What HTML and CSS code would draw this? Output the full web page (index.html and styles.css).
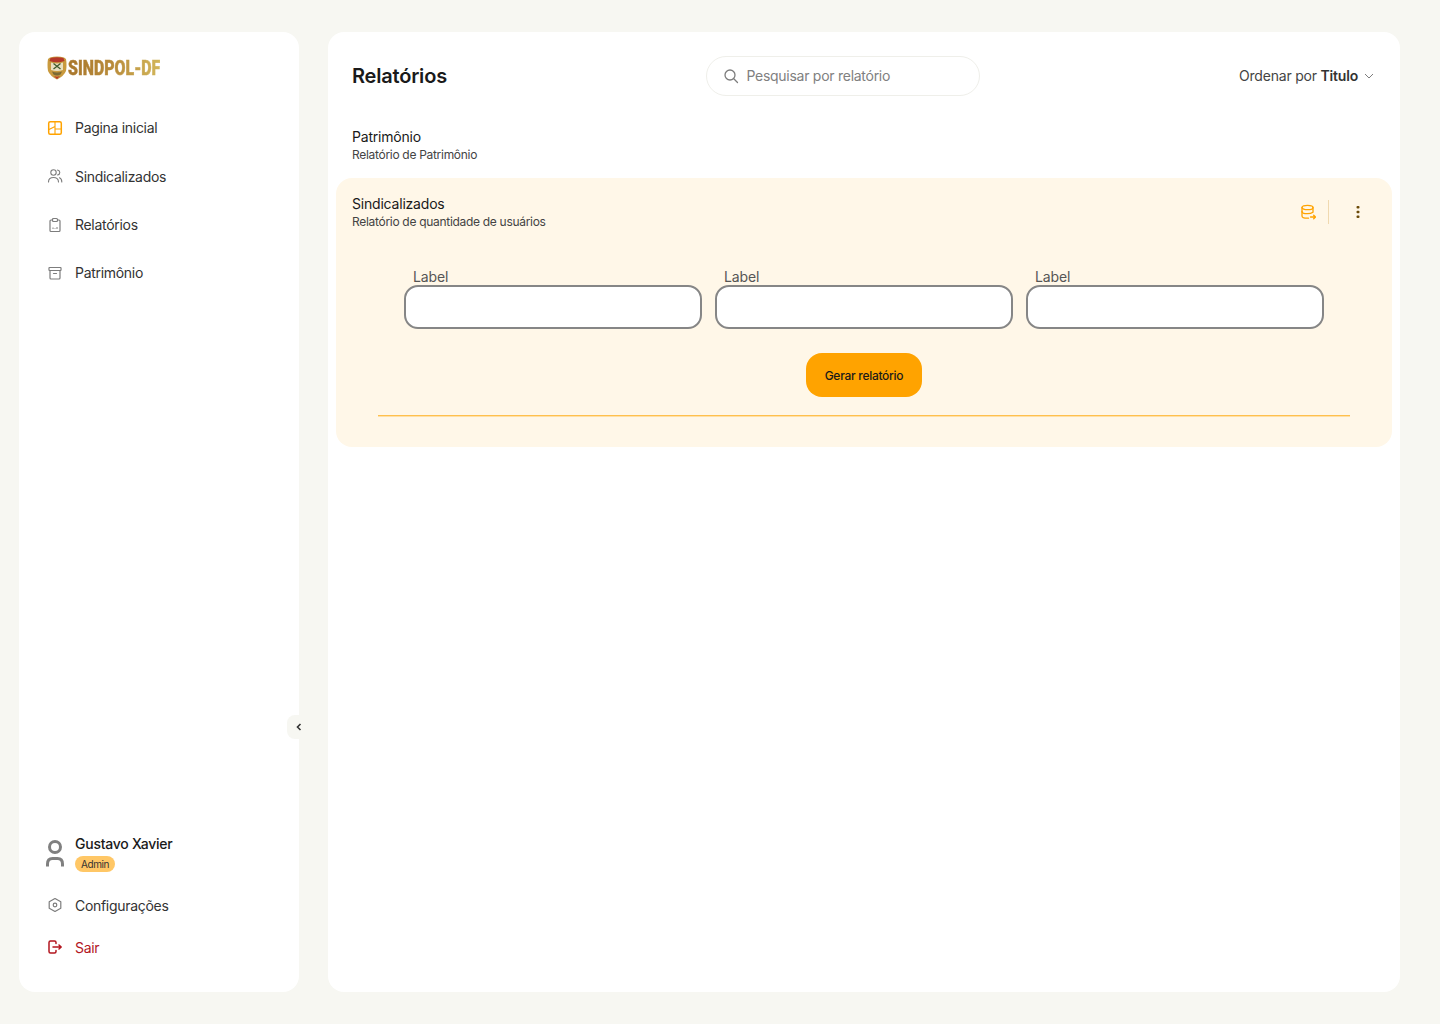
FILE: index.html
```html
<!DOCTYPE html>
<html lang="pt-BR">
<head>
    <meta charset="UTF-8">
    <meta name="viewport" content="width=device-width, initial-scale=1.0">
    <title>Relatórios</title>
    <link rel="stylesheet" href="styles.css">
</head>
<body>
    <aside class="sidebar">
        <div class="logo">
            <svg class="logo-shield" width="20" height="24" viewBox="0 0 20 24">
                <path d="M3 1.500 Q10 -0.500 17 1.500 L19 3 Q20 9 19 15 Q17 20 10 23.500 Q3 20 1 15 Q0 9 1 3 Z" fill="#c99a3e"/>
                <path d="M3.500 2 Q10 0.500 16.500 2 L17.500 5 Q10 7.500 2.500 5 Z" fill="#b5382a"/>
                <path d="M4 6.500 Q10 8.500 16 6.500 L16 14 Q10 16 4 14 Z" fill="#e9e0c0"/>
                <path d="M6.500 7.500 L13.500 13 M13.500 7.500 L6.500 13" stroke="#3f5a2c" stroke-width="1.300"/>
                <path d="M5 15.500 Q10 17.500 15 15.500 L13.500 18.500 Q10 20.500 6.500 18.500 Z" fill="#7a6a35"/>
                <path d="M7 20 Q10 21.500 13 20 L10 23 Z" fill="#b5382a"/>
            </svg>
            <span class="logo-text">SINDPOL-DF</span>
        </div>

        <nav class="nav">
            <a class="nav-item active" href="#">
                <svg class="icon" viewBox="0 0 16 16" fill="none" stroke="#ffa300" stroke-linejoin="round">
                    <rect x="1.700" y="1.700" width="12.600" height="12.600" rx="1.500" stroke-width="1.500"/>
                    <path d="M8 2 V14 M2 9.500 L8 6.500 M8 9 H14" stroke-width="1.100"/>
                </svg>
                <span>Pagina inicial</span>
            </a>
            <a class="nav-item" href="#">
                <svg class="icon" viewBox="0 0 16 16" fill="none" stroke="#7d7d7d" stroke-width="1.100" stroke-linecap="round">
                    <circle cx="6.500" cy="4.500" r="2.700"/>
                    <path d="M1.500 14 C1.500 11 3.500 9.500 6.500 9.500 C9.500 9.500 11.500 11 11.500 14"/>
                    <path d="M10.500 2 C12 2.300 12.800 3.300 12.800 4.500 C12.800 5.700 12 6.700 10.500 7"/>
                    <path d="M12.500 9.700 C14 10.300 14.800 11.800 14.800 14"/>
                </svg>
                <span>Sindicalizados</span>
            </a>
            <a class="nav-item" href="#">
                <svg class="icon" viewBox="0 0 16 16" fill="none" stroke="#7d7d7d" stroke-width="1.200" stroke-linejoin="round">
                    <path d="M5.500 3 H4 Q3 3 3 4 V13.500 Q3 14.500 4 14.500 H12 Q13 14.500 13 13.500 V4 Q13 3 12 3 H10.500"/>
                    <rect x="5.500" y="1.500" width="5" height="3" rx="1"/>
                    <path d="M6 12 V10.500 M8 12 V11.300 M10 12 V10" stroke-width="1"/>
                </svg>
                <span>Relatórios</span>
            </a>
            <a class="nav-item" href="#">
                <svg class="icon" viewBox="0 0 16 16" fill="none" stroke="#7d7d7d" stroke-width="1.200" stroke-linejoin="round">
                    <rect x="2" y="2.500" width="12" height="3" rx="0.500"/>
                    <path d="M3 5.500 V13 Q3 14 4 14 H12 Q13 14 13 13 V5.500"/>
                    <path d="M6.500 8.500 H9.500" stroke-linecap="round"/>
                </svg>
                <span>Patrimônio</span>
            </a>
        </nav>

        <div class="sidebar-bottom">
            <div class="user">
                <svg class="user-icon" width="20" height="28" viewBox="0 0 20 28" fill="none" stroke="#808080" stroke-width="3">
                    <circle cx="10" cy="7" r="5.500"/>
                    <path d="M2.500 26.500 V24 C2.500 20.500 4.500 18.500 7.500 18.500 H12.500 C15.500 18.500 17.500 20.500 17.500 24 V26.500"/>
                </svg>
                <div class="user-info">
                    <span class="user-name">Gustavo Xavier</span>
                    <span class="badge">Admin</span>
                </div>
            </div>
            <a class="nav-item short" href="#">
                <svg class="icon" viewBox="0 0 16 16" fill="none" stroke="#7d7d7d" stroke-width="1.200" stroke-linejoin="round">
                    <path d="M8 1.500 L13.800 4.800 V11.200 L8 14.500 L2.200 11.200 V4.800 Z"/>
                    <circle cx="8" cy="8" r="1.800"/>
                </svg>
                <span>Configurações</span>
            </a>
            <a class="nav-item short logout" href="#">
                <svg class="icon" viewBox="0 0 16 16" fill="none" stroke="#b3161f" stroke-width="1.500" stroke-linecap="round" stroke-linejoin="round">
                    <path d="M9 4.500 V3.500 Q9 2 7.500 2 H3.500 Q2 2 2 3.500 V12.500 Q2 14 3.500 14 H7.500 Q9 14 9 12.500 V11.500"/>
                    <path d="M6 8 H14 M12 6 L14.200 8 L12 10"/>
                </svg>
                <span>Sair</span>
            </a>
        </div>

        <button class="collapse" type="button">
            <svg width="8" height="10" viewBox="0 0 8 10" fill="none" stroke="#333" stroke-width="1.600">
                <path d="M5.500 2 L2.500 5 L5.500 8"/>
            </svg>
        </button>
    </aside>

    <main class="content">
        <header class="content-header">
            <h1>Relatórios</h1>
            <div class="search">
                <svg width="16" height="16" viewBox="0 0 16 16" fill="none" stroke="#7d7d7d" stroke-width="1.300" stroke-linecap="round">
                    <circle cx="7" cy="7" r="5"/>
                    <path d="M10.800 10.800 L14.500 14.500"/>
                </svg>
                <span>Pesquisar por relatório</span>
            </div>
            <div class="sort">
                <span>Ordenar por <b>Titulo</b></span>
                <svg width="10" height="10" viewBox="0 0 10 10" fill="none" stroke="#7d7d7d" stroke-width="1">
                    <path d="M1 3 L5 7 L9 3"/>
                </svg>
            </div>
        </header>

        <section class="reports">
            <div class="report">
                <div class="report-head">
                    <div>
                        <div class="report-title">Patrimônio</div>
                        <div class="report-sub">Relatório de Patrimônio</div>
                    </div>
                </div>
            </div>

            <div class="report open">
                <div class="report-head">
                    <div>
                        <div class="report-title">Sindicalizados</div>
                        <div class="report-sub">Relatório de quantidade de usuários</div>
                    </div>
                    <div class="report-actions">
                        <svg width="16" height="16" viewBox="0 0 16 16" fill="none" stroke="#ffa300" stroke-width="1.300" stroke-linecap="round" stroke-linejoin="round">
                            <ellipse cx="7.500" cy="3.500" rx="5.500" ry="2.200"/>
                            <path d="M2 3.500 V12 C2 13.300 4.500 14.200 7.500 14.200 H8.500"/>
                            <path d="M2 7.500 C2 8.800 4.500 9.700 7.500 9.700 C9.500 9.700 11.500 9.300 13 8.300 V3.500"/>
                            <path d="M10.500 13 H15.500 M13.700 11.200 L15.500 13 L13.700 14.800"/>
                        </svg>
                        <span class="sep"></span>
                        <svg class="dots" width="4" height="14" viewBox="0 0 4 14" fill="#6b4a08">
                            <rect x="0.500" y="1" width="3" height="2.500" rx="1"/>
                            <rect x="0.500" y="5.700" width="3" height="2.500" rx="1"/>
                            <rect x="0.500" y="10.400" width="3" height="2.500" rx="1"/>
                        </svg>
                    </div>
                </div>

                <form class="report-form">
                    <div class="fields">
                        <label class="field"><span>Label</span><input type="text"></label>
                        <label class="field"><span>Label</span><input type="text"></label>
                        <label class="field"><span>Label</span><input type="text"></label>
                    </div>
                    <button class="generate" type="button">Gerar relatório</button>
                </form>
                <div class="divider"></div>
            </div>
        </section>
    </main>
</body>
</html>
```

FILE: styles.css
```css
* {
    box-sizing: border-box;
}

body {
    margin: 0;
    height: 1024px;
    padding: 32px 40px 32px 19px;
    display: flex;
    gap: 29px;
    background-color: #f7f7f2;
    font-family: Inter, "Noto Sans", sans-serif;
    color: #1a1a1a;
    overflow: hidden;
}

a {
    text-decoration: none;
    color: inherit;
}

.sidebar {
    position: relative;
    width: 280px;
    height: 960px;
    flex-shrink: 0;
    display: flex;
    flex-direction: column;
    padding: 24px 0 24px 28px;
    background: #fff;
    border-radius: 16px;
}

.logo {
    display: flex;
    align-items: center;
    gap: 1px;
    height: 24px;
    margin-bottom: 23.8px;
}

.logo-text {
    font-family: Roboto, "Liberation Sans", sans-serif;
    font-weight: 900;
    font-size: 20px;
    transform: scaleX(0.795);
    transform-origin: left center;
    white-space: nowrap;
    background: linear-gradient(90deg, #a9772c 0%, #b98c3a 50%, #d2b65a 100%);
    -webkit-background-clip: text;
    background-clip: text;
    color: transparent;
    -webkit-text-stroke: 0.5px transparent;
}

.nav-item {
    display: flex;
    align-items: center;
    gap: 12px;
    height: 48.33px;
    font-size: 14px;
    letter-spacing: -0.3px;
    color: #333;
}

.nav-item.short {
    height: 42px;
}

.nav-item.logout {
    color: #b3161f;
}

.icon {
    width: 16px;
    height: 16px;
    flex-shrink: 0;
}

.sidebar-bottom {
    margin-top: auto;
}

.user {
    display: flex;
    align-items: center;
    gap: 10px;
    margin-bottom: 12px;
}

.user-icon {
    margin-left: -2px;
    margin-top: 1px;
}

.user-info {
    display: flex;
    flex-direction: column;
    align-items: flex-start;
    gap: 4px;
}

.user-name {
    font-size: 14px;
    font-weight: 500;
    line-height: 17px;
    letter-spacing: -0.25px;
}

.badge {
    padding: 0 6px;
    font-size: 10px;
    line-height: 16px;
    letter-spacing: -0.4px;
    color: #333;
    background: #ffc766;
    border-radius: 8px;
}

.collapse {
    position: absolute;
    right: -8px;
    top: 683px;
    width: 20px;
    height: 24px;
    padding: 0 0 0 4px;
    display: flex;
    align-items: center;
    justify-content: center;
    border: none;
    border-radius: 8px 0 0 8px;
    background: #f7f7f2;
}

.content {
    width: 1072px;
    height: 960px;
    background: #fff;
    border-radius: 16px;
    padding: 24px 8px 0;
}

.content-header {
    display: flex;
    align-items: center;
    justify-content: space-between;
    padding: 0 18px 0 16px;
    height: 40px;
}

h1 {
    margin: 0;
    font-size: 20px;
    font-weight: 600;
    letter-spacing: -0.2px;
}

.search {
    width: 274px;
    height: 40px;
    margin-left: 1px;
    display: flex;
    align-items: center;
    gap: 7px;
    padding: 0 16px;
    border: 1px solid #efefea;
    border-radius: 20px;
    font-size: 14px;
    line-height: 16px;
    letter-spacing: -0.27px;
    color: #808080;
}

.sort {
    display: flex;
    align-items: center;
    gap: 6px;
    font-size: 14px;
    line-height: 16px;
    letter-spacing: -0.2px;
    color: #444;
}

.sort b {
    font-weight: 600;
    color: #333;
}

.reports {
    margin-top: 15px;
}

.report-head {
    display: flex;
    justify-content: space-between;
    align-items: center;
    padding: 16px 16px 15px;
}

.report-title {
    font-size: 14px;
    line-height: 20px;
    letter-spacing: -0.2px;
}

.report-sub {
    font-size: 12px;
    line-height: 16px;
    letter-spacing: -0.3px;
    color: #444;
}

.report.open {
    height: 269px;
    background: #fff7e8;
    border-radius: 16px;
}

.report-actions {
    display: flex;
    align-items: center;
    gap: 12px;
    padding-right: 16px;
}

.sep {
    width: 1px;
    height: 24px;
    background: #f0d9b0;
    margin-right: 15px;
}

.report-form {
    padding: 0 68px;
    margin-top: 24px;
    display: flex;
    flex-direction: column;
    align-items: center;
}

.fields {
    width: 100%;
    display: grid;
    grid-template-columns: repeat(3, 1fr);
    gap: 13px;
}

.field span {
    display: block;
    padding-left: 9px;
    font-size: 14px;
    line-height: 16px;
    letter-spacing: -0.1px;
    color: #555;
}

.field input {
    display: block;
    width: 100%;
    height: 44px;
    background: #fff;
    border: 2px solid #868686;
    border-radius: 14px;
}

.generate {
    width: 116px;
    height: 44px;
    margin-top: 24px;
    border: none;
    border-radius: 16px;
    background: #ffa300;
    font-family: Inter, "Noto Sans", sans-serif;
    font-size: 12px;
    font-weight: 500;
    letter-spacing: -0.28px;
    color: #1a1a1a;
}

.divider {
    height: 2px;
    margin: 18px 42px 0;
    background: linear-gradient(#ffc04d 50%, #ffe0a6 50%);
}
```
